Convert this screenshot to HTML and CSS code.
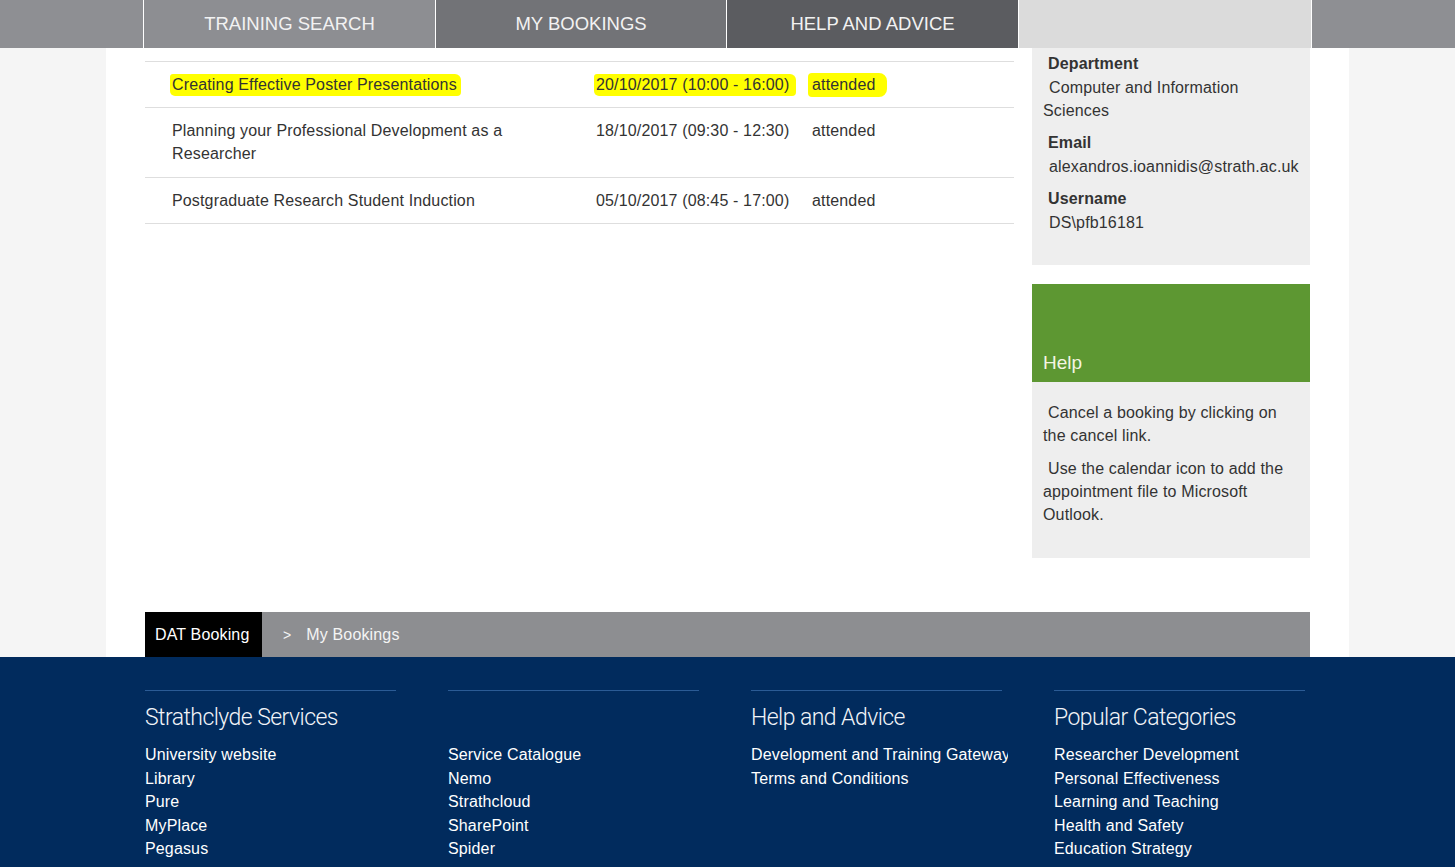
FILE: index.html
```html
<!DOCTYPE html>
<html lang="en">
<head>
<meta charset="utf-8">
<title>My Bookings</title>
<link rel="stylesheet" href="styles.css">
</head>
<body>
<header class="topnav">
  <nav class="tabs">
    <a class="tab tab-search" href="#">TRAINING SEARCH</a>
    <a class="tab tab-bookings" href="#">MY BOOKINGS</a>
    <a class="tab tab-help" href="#">HELP AND ADVICE</a>
    <span class="tab tab-empty"></span>
  </nav>
</header>
<div class="page">
  <div class="content">
    <main class="bookings">
      <div class="row">
        <div class="cell c-title"><span class="hl hl-title">Creating Effective Poster Presentations</span></div>
        <div class="cell c-date"><span class="hl hl-date">20/10/2017 (10:00 - 16:00)</span></div>
        <div class="cell c-status"><span class="hl hl-status">attended</span></div>
      </div>
      <div class="row">
        <div class="cell c-title">Planning your Professional Development as a Researcher</div>
        <div class="cell c-date">18/10/2017 (09:30 - 12:30)</div>
        <div class="cell c-status">attended</div>
      </div>
      <div class="row">
        <div class="cell c-title">Postgraduate Research Student Induction</div>
        <div class="cell c-date">05/10/2017 (08:45 - 17:00)</div>
        <div class="cell c-status">attended</div>
      </div>
    </main>
    <aside class="sidebar">
      <div class="profile">
        <div class="group">
          <div class="label">Department</div>
          <div class="value">Computer and Information Sciences</div>
        </div>
        <div class="group">
          <div class="label">Email</div>
          <div class="value">alexandros.ioannidis@strath.ac.uk</div>
        </div>
        <div class="group">
          <div class="label">Username</div>
          <div class="value">DS\pfb16181</div>
        </div>
      </div>
      <div class="helpbox">
        <div class="help-head">Help</div>
        <div class="help-body">
          <p>Cancel a booking by clicking on the cancel link.</p>
          <p>Use the calendar icon to add the appointment file to Microsoft Outlook.</p>
        </div>
      </div>
    </aside>
  </div>
  <div class="crumbs">
    <a class="crumb-home" href="#">DAT Booking</a>
    <span class="crumb-sep">&gt;</span>
    <span class="crumb-current">My Bookings</span>
  </div>
</div>
<footer class="footer">
  <div class="foot-cols">
    <div class="fcol">
      <h3 class="fhead">Strathclyde Services</h3>
      <ul class="flinks">
        <li><a href="#">University website</a></li>
        <li><a href="#">Library</a></li>
        <li><a href="#">Pure</a></li>
        <li><a href="#">MyPlace</a></li>
        <li><a href="#">Pegasus</a></li>
      </ul>
    </div>
    <div class="fcol">
      <h3 class="fhead">&nbsp;</h3>
      <ul class="flinks">
        <li><a href="#">Service Catalogue</a></li>
        <li><a href="#">Nemo</a></li>
        <li><a href="#">Strathcloud</a></li>
        <li><a href="#">SharePoint</a></li>
        <li><a href="#">Spider</a></li>
      </ul>
    </div>
    <div class="fcol">
      <h3 class="fhead">Help and Advice</h3>
      <ul class="flinks">
        <li><a href="#">Development and Training Gateway</a></li>
        <li><a href="#">Terms and Conditions</a></li>
      </ul>
    </div>
    <div class="fcol">
      <h3 class="fhead">Popular Categories</h3>
      <ul class="flinks">
        <li><a href="#">Researcher Development</a></li>
        <li><a href="#">Personal Effectiveness</a></li>
        <li><a href="#">Learning and Teaching</a></li>
        <li><a href="#">Health and Safety</a></li>
        <li><a href="#">Education Strategy</a></li>
      </ul>
    </div>
  </div>
</footer>
</body>
</html>
```

FILE: styles.css
```css
* { box-sizing: border-box; }
html, body { margin: 0; padding: 0; }
body {
  background: #f5f5f5;
  font-family: "Liberation Sans", Arial, sans-serif;
  font-size: 16px;
  letter-spacing: 0.15px;
  color: #333;
}
a { text-decoration: none; color: inherit; }

.topnav {
  background: #8e8f93;
  height: 48px;
}
.tabs {
  width: 1169px;
  margin: 0 auto;
  display: flex;
  height: 48px;
}
.tab {
  flex: 0 0 auto;
  border-left: 1px solid #fff;
  display: flex;
  align-items: center;
  justify-content: center;
  color: #f2f2f2;
  font-size: 18.5px;
  letter-spacing: 0;
}
.tab-search { background: #8d8e92; width: 292px; }
.tab-bookings { background: #727377; width: 291px; }
.tab-help { background: #5b5c60; width: 292px; }
.tab-empty { background: #dbdbdb; width: 294px; border-right: 1px solid #fff; }

.page {
  width: 1243px;
  margin: 0 auto;
  background: #fff;
  padding: 0 39px;
}
.content {
  display: flex;
  gap: 18px;
  align-items: flex-start;
}
.bookings {
  width: 869px;
  padding-top: 13px;
}
.row {
  display: flex;
  border-top: 1px solid #dedede;
  line-height: 23px;
  padding: 11px 0;
}
.row:nth-child(2) { padding-bottom: 12px; }
.row:last-child { border-bottom: 1px solid #dedede; }
.c-title { width: 451px; padding: 0 24px 0 27px; }
.c-date { width: 216px; }
.c-status { flex: 1; }

.hl {
  background: #ffff00;
  border-radius: 3px 6px 4px 5px;
  padding: 2px 2px 3px;
  margin: 0 -2px;
}
.hl-title { padding-right: 4px; }
.hl-date { padding-right: 7px; }
.hl-status { padding: 3px 12px 4px 4px; margin-left: -4px; border-radius: 4px 8px 8px 4px; }

.sidebar { width: 278px; }
.profile {
  background: #eeeeee;
  padding: 4px 20px 31px 11px;
}
.group { margin-bottom: 9px; }
.group:last-child { margin-bottom: 0; }
.label {
  font-weight: bold;
  line-height: 24px;
  text-indent: 5px;
  color: #333;
}
.value {
  line-height: 23px;
  text-indent: 6px;
}
.helpbox { margin-top: 19px; }
.help-head {
  background: #5d9732;
  height: 98px;
  display: flex;
  align-items: flex-end;
  padding: 0 11px 8px;
  color: #f4f5e2;
  font-size: 19px;
  letter-spacing: 0;
}
.help-body {
  background: #eeeeee;
  padding: 19px 20px 32px 11px;
}
.help-body p {
  margin: 0 0 10px;
  line-height: 23px;
  text-indent: 5px;
}
.help-body p:last-child { margin-bottom: 0; }

.crumbs {
  margin-top: 54px;
  height: 45px;
  background: #8d8e91;
  display: flex;
  align-items: center;
  color: #f4f4f4;
}
.crumb-home {
  background: #000;
  color: #fff;
  height: 45px;
  display: flex;
  align-items: center;
  padding: 0 8px 0 10px;
  width: 117px;
}
.crumb-sep { margin-left: 21px; font-size: 14px; }
.crumb-current { margin-left: 15px; }

.footer {
  background: #012b5d;
  padding: 33px 0 60px;
  color: #fff;
}
.foot-cols {
  width: 1165px;
  margin: 0 auto;
  display: grid;
  grid-template-columns: 257px 257px 257px 257px;
  column-gap: 46px;
}
.fcol { overflow: hidden; }
.fhead {
  margin: 0;
  width: 251px;
  border-top: 1px solid #2b5b95;
  font-family: Roboto, "Liberation Sans", sans-serif;
  font-weight: 300;
  font-size: 23px;
  letter-spacing: -0.55px;
  line-height: 28px;
  padding-top: 13px;
  color: #f2f4f8;
}
.flinks {
  list-style: none;
  margin: 11px 0 0;
  padding: 0;
}
.flinks li {
  line-height: 23.5px;
  white-space: nowrap;
  color: #fff;
}
```
